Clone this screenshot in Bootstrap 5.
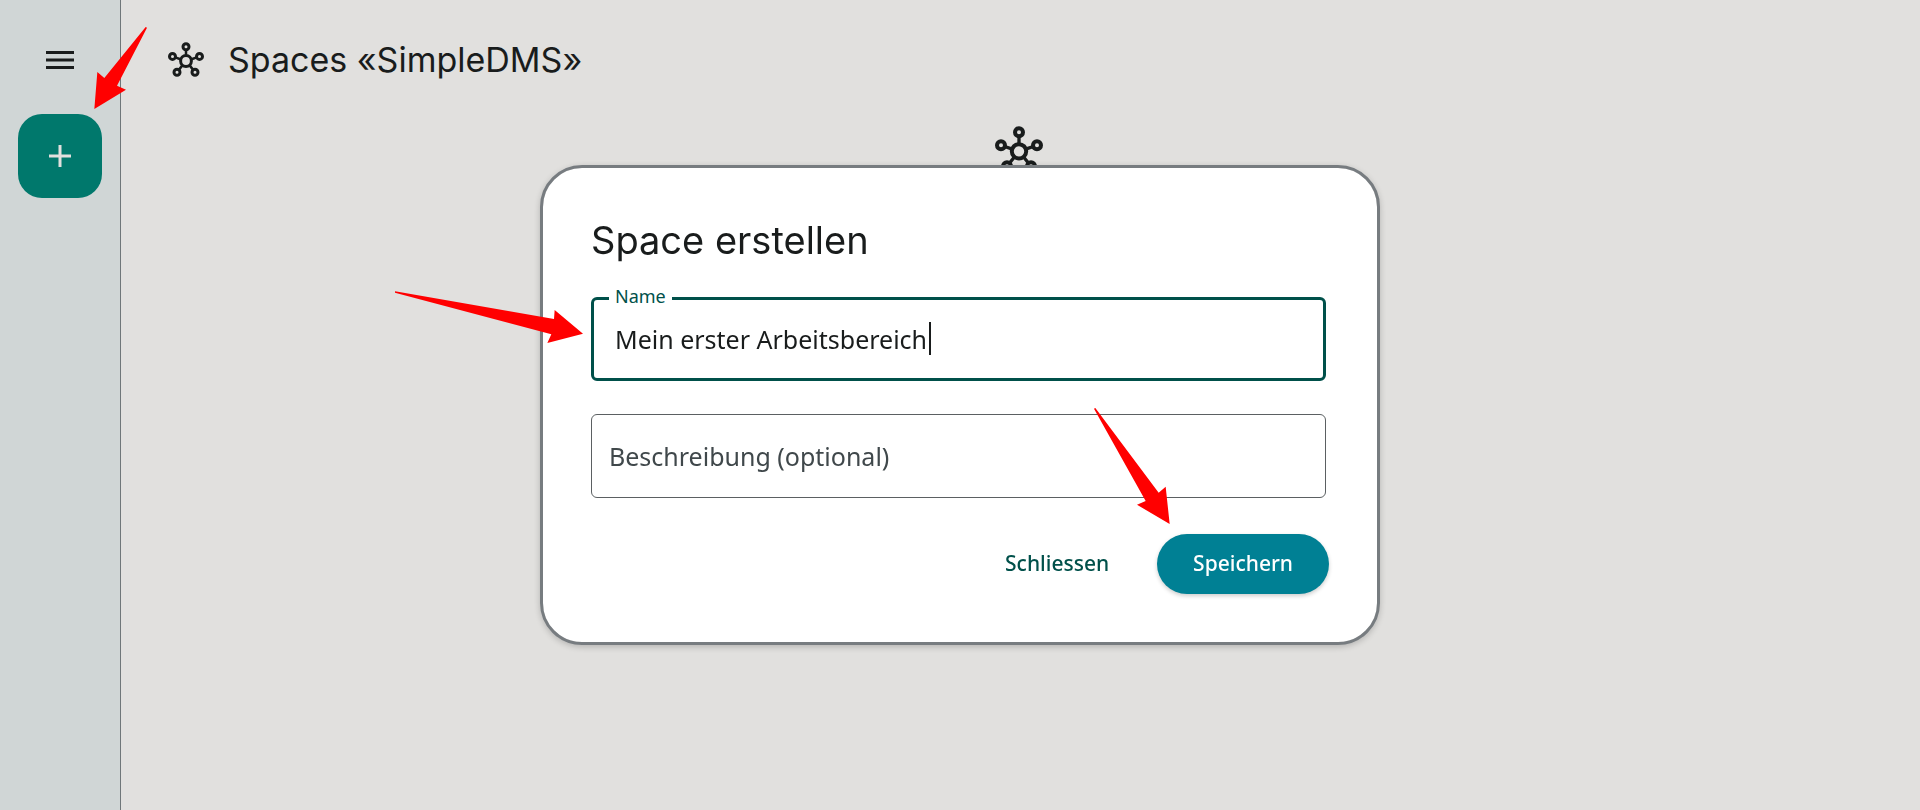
<!DOCTYPE html>
<html lang="de">
<head>
<meta charset="utf-8">
<meta name="viewport" content="width=device-width, initial-scale=1">
<title>Spaces «SimpleDMS»</title>
<link href="https://cdn.jsdelivr.net/npm/bootstrap@5.3.0/dist/css/bootstrap.min.css" rel="stylesheet">
<style>
  body { background: #e1e0de; color: #191c1c; font-family: "Noto Sans", sans-serif; font-size: 25px; line-height: 36px; }
  h1, h2 { font-family: Inter, sans-serif; font-weight: 400; line-height: 48px; }
  h1 { font-size: 34px; }
  h2 { font-size: 38px; }
  .rail { width: 121px; background: #d0d6d6; border-right: 1px solid #6f7679; }
  .rail-menu { height: 120px; margin-bottom: -6px; }
  .rail-add { width: 84px; height: 84px; border-radius: 24px; background: #00786c; color: #e1e0de; }
  .rail-add:hover { background: #00695f; color: #fff; }
  .topbar { min-height: 120px; padding: 0 47px; gap: 24px; }
  .empty-state { padding: 6px 4px 0 0; }
  .space-dialog { --bs-modal-width: 840px; }
  .space-dialog .modal-content { border: 3px solid #777c80; border-radius: 42px; padding: 48px; box-shadow: 0 2px 6px rgba(0, 0, 0, .2); }
  .fields { gap: 33px; margin: 33px 3px 0 0; }
  .field .form-control { height: 84px; padding: 0 23px; border: 1px solid #5b6062; border-radius: 6px; font-size: 25px; color: #191c1c; background: #fff; box-shadow: none; }
  .field .form-control.active { padding: 0 21px; border: 3px solid #00504a; }
  .field-label { position: absolute; left: 18px; top: 24px; color: #40484b; pointer-events: none; }
  .field-label.raised { top: -13px; padding: 0 6px; background: #fff; color: #00504a; font-size: 18px; line-height: 24px; }
  .caret { position: absolute; left: 338px; top: 25px; width: 2px; height: 33px; background: #191c1c; }
  .actions { gap: 12px; margin-top: 36px; }
  .actions .btn { height: 60px; padding: 0 36px; border: 0; border-radius: 30px; font-size: 21px; font-weight: 500; }
  .btn-text { color: #00504a; }
  .btn-save, .btn-save:hover { background: #008094; color: #fff; box-shadow: 0 2px 4px rgba(0, 0, 0, .2); }
  .pointer { position: absolute; z-index: 3; fill: #f00; pointer-events: none; }
  .pointer-add { left: 92px; top: 25px; }
  .pointer-name { left: -151px; top: 120px; }
  .pointer-save { left: 547px; top: 237px; }
</style>
</head>
<body>
<svg class="d-none" aria-hidden="true">
  <symbol id="hub" viewBox="-18 -19 36 36">
    <g fill="none" stroke="currentColor" stroke-width="3">
      <circle r="5.4"/>
      <circle cy="-14.3" r="3"/>
      <circle cx="-13.5" cy="-4.6" r="3"/>
      <circle cx="13.5" cy="-4.6" r="3"/>
      <circle cx="-9" cy="11.2" r="3"/>
      <circle cx="9" cy="11.2" r="3"/>
      <path stroke-width="2.5" d="M0-11.5V-6M-10.8-3.6L-5.5-1.8M10.8-3.6L5.5-1.8M-7.2 8.9L-3.6 4.4M7.2 8.9L3.6 4.4"/>
    </g>
  </symbol>
</svg>

<div class="d-flex min-vh-100 position-relative">
  <nav class="rail d-flex flex-column align-items-center flex-shrink-0" aria-label="Hauptnavigation">
    <button class="rail-menu btn border-0 p-0" type="button" aria-label="Menü">
      <svg class="d-block mx-auto" width="28" height="18" viewBox="0 0 28 18" fill="#191c1c"><path d="M0 0h28v3H0zM0 7.5h28v3H0zM0 15h28v3H0z"/></svg>
    </button>
    <button class="rail-add btn border-0 p-0" type="button" aria-label="Space erstellen">
      <svg class="d-block mx-auto" width="22" height="22" viewBox="0 0 22 22" fill="none" stroke="currentColor" stroke-width="3"><path d="M11 0v22M0 11h22"/></svg>
    </button>
  </nav>
  <svg class="pointer pointer-add" width="57" height="86" viewBox="276 75 171 258"><path d="M283 327L292 216 313 234 437 81 441 83 351 257 378 269Z"/></svg>

  <main class="flex-grow-1">
    <header class="topbar d-flex align-items-center">
      <svg width="36" height="36" aria-hidden="true"><use href="#hub"/></svg>
      <h1 class="mb-0">Spaces «SimpleDMS»</h1>
    </header>
    <section class="empty-state d-flex justify-content-center">
      <svg width="48" height="48" aria-hidden="true"><use href="#hub"/></svg>
    </section>
  </main>
</div>

<div class="modal d-block" role="dialog" aria-modal="true" aria-labelledby="dialog-title">
  <div class="modal-dialog modal-dialog-centered space-dialog">
    <form class="modal-content">
      <h2 class="mb-0" id="dialog-title">Space erstellen</h2>
      <div class="fields d-flex flex-column">
        <div class="field position-relative">
          <input class="form-control active" id="space-name" type="text" value="Mein erster Arbeitsbereich">
          <label class="field-label raised" for="space-name">Name</label>
          <span class="caret"></span>
        </div>
        <div class="field position-relative">
          <input class="form-control" id="space-description" type="text">
          <label class="field-label" for="space-description">Beschreibung (optional)</label>
        </div>
      </div>
      <div class="actions d-flex justify-content-end">
        <button class="btn btn-text" type="button">Schliessen</button>
        <button class="btn btn-save" type="button">Speichern</button>
      </div>
      <svg class="pointer pointer-name" width="194" height="58" viewBox="36 54 582 174"><path d="M45 64L522 147 524 120 609 191 502 219 514 193 45 68Z"/></svg>
      <svg class="pointer pointer-save" width="83" height="121" viewBox="390 45 249 363"><path d="M402 56L406 54 596 308 617 290 629 402 531 344 557 333Z"/></svg>
    </form>
  </div>
</div>
<script src="https://cdn.jsdelivr.net/npm/bootstrap@5.3.0/dist/js/bootstrap.bundle.min.js"></script>
</body>
</html>
